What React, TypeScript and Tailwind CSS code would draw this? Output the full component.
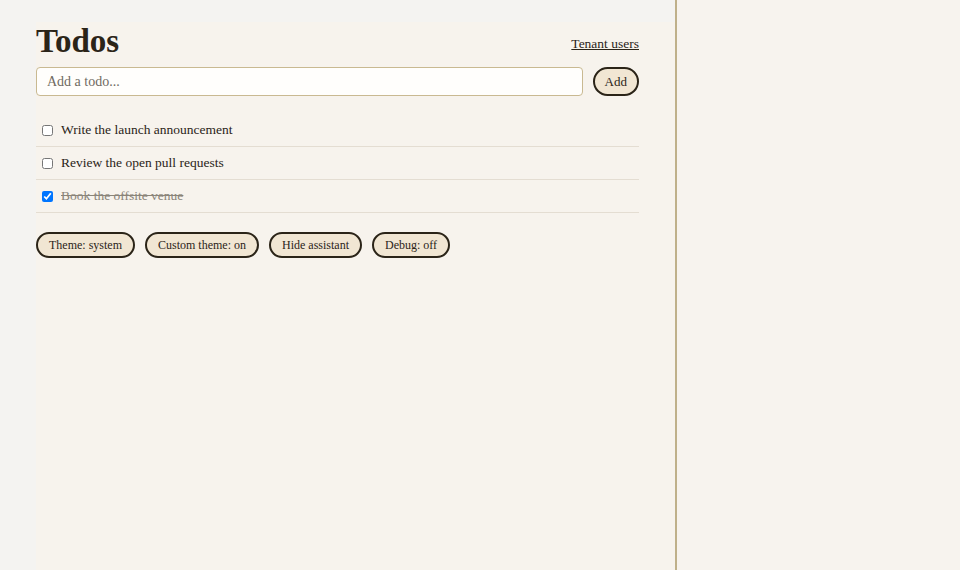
import React, { useState } from 'react';

interface Todo {
  id: number;
  text: string;
  done: boolean;
}

const initialTodos: Todo[] = [
  { id: 1, text: 'Write the launch announcement', done: false },
  { id: 2, text: 'Review the open pull requests', done: false },
  { id: 3, text: 'Book the offsite venue', done: true },
];

const pill =
  'h-[26px] rounded-full border-2 border-[#2b2418] bg-[#f1e6d3] px-[11px] text-[12px] leading-none text-[#2b2418]';

const App: React.FC = () => {
  const [todos, setTodos] = useState<Todo[]>(initialTodos);
  const [draft, setDraft] = useState('');

  const toggle = (id: number) =>
    setTodos((list) => list.map((t) => (t.id === id ? { ...t, done: !t.done } : t)));

  const add = () => {
    if (!draft.trim()) return;
    setTodos((list) => [...list, { id: Date.now(), text: draft.trim(), done: false }]);
    setDraft('');
  };

  return (
    <div
      className="flex h-[570px] w-[960px] overflow-hidden bg-[#f4f3f1] text-[#2b2418]"
      style={{ fontFamily: '"Liberation Serif", "DejaVu Serif", serif' }}
    >
      {/* main column */}
      <div className="flex w-[675px] shrink-0 pl-9 pt-[22px]">
        <div className="flex flex-1 flex-col bg-[#f7f3ed] pr-9">
          <div className="flex items-end justify-between">
            <h1 className="pt-[1px] text-[33px] font-bold leading-[36px] text-[#2b2418]">Todos</h1>
            <a href="#" className="mb-[5px] text-[13.5px] underline">
              Tenant users
            </a>
          </div>

          <div className="mt-[8px] flex items-center gap-[10px]">
            <input
              value={draft}
              onChange={(e) => setDraft(e.target.value)}
              placeholder="Add a todo..."
              className="h-[29px] flex-1 rounded-[4px] border border-[#c9b991] bg-[#fffefc] px-[10px] text-[14px] placeholder:text-[#6f6a62] focus:outline-none"
            />
            <button onClick={add} className="h-[29px] rounded-full border-2 border-[#2b2418] bg-[#f1e6d3] px-[10px] text-[13px]">
              Add
            </button>
          </div>

          <ul className="mt-[18px]">
            {todos.map((t) => (
              <li key={t.id} className="flex h-[33px] items-center gap-[8px] border-b border-[#e4ddd2] pl-[6px]">
                <input
                  type="checkbox"
                  checked={t.done}
                  onChange={() => toggle(t.id)}
                  className="m-0 h-[11px] w-[11px]"
                />
                <span className={t.done ? 'text-[13.5px] text-[#8a8479] line-through' : 'text-[13.5px]'}>{t.text}</span>
              </li>
            ))}
          </ul>

          <div className="mt-[19px] flex gap-[10px]">
            <button className={pill}>Theme: system</button>
            <button className={pill}>Custom theme: on</button>
            <button className={pill}>Hide assistant</button>
            <button className={pill}>Debug: off</button>
          </div>
        </div>
      </div>

      <div className="w-[2px] shrink-0 bg-[#bfb08a]" />

      {/* assistant panel */}
      <div className="flex-1 bg-[#f7f3ee]" />
    </div>
  );
};

export default App;
